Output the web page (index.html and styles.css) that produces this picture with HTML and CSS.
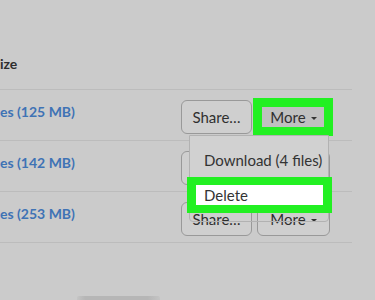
FILE: index.html
```html
<!DOCTYPE html>
<html>
<head>
<meta charset="utf-8">
<link rel="stylesheet" href="styles.css">
</head>
<body>
<div class="table">
  <div class="head">ize</div>
  <div class="row">
    <div class="name">es (125 MB)</div>
    <div class="actions">
      <button class="btn share">Share…</button>
      <div class="more-wrap">
        <button class="btn more active">More <span class="caret"></span></button>
        <span class="hl hl-more"></span>
        <div class="menu">
          <div class="menu-list">
            <div class="item">Download (4 files)</div>
            <div class="item sel">Delete<span class="hl hl-del"></span></div>
          </div>
        </div>
      </div>
    </div>
  </div>
  <div class="row">
    <div class="name">es (142 MB)</div>
    <div class="actions">
      <button class="btn share">Share…</button>
      <button class="btn more">More <span class="caret"></span></button>
    </div>
  </div>
  <div class="row">
    <div class="name">es (253 MB)</div>
    <div class="actions">
      <button class="btn share">Share…</button>
      <button class="btn more">More <span class="caret"></span></button>
    </div>
  </div>
</div>
<div class="scroll"><span class="thumb"></span></div>
</body>
</html>
```
FILE: styles.css
```css
html, body {
  margin: 0;
  padding: 0;
  height: 300px;
  overflow: hidden;
}
body {
  background: #cbcbcb;
  font-family: Lato, "Open Sans", sans-serif;
  color: #333;
}
.table {
  width: 352px;
}
.head {
  padding: 55px 0 17px;
  line-height: 17px;
  font-size: 14px;
  font-weight: 700;
  color: #2e2e2e;
  border-bottom: 1px solid #bcbcbc;
}
.row {
  display: flex;
  align-items: flex-start;
  height: 50px;
  padding-right: 22px;
  border-bottom: 1px solid #bcbcbc;
}
.row:nth-child(2) {
  position: relative;
  z-index: 2;
}
.name {
  flex: 1;
  margin-top: 13px;
  line-height: 17px;
  font-size: 14px;
  font-weight: 700;
  color: #3f73b5;
}
.actions {
  display: flex;
  gap: 5px;
  margin-top: 10px;
}
.btn {
  box-sizing: border-box;
  height: 34px;
  border: 1px solid #999;
  border-radius: 6px;
  background: #cfcfcf;
  font-family: Lato, "Open Sans", sans-serif;
  font-size: 15px;
  color: #2f2f2f;
  padding: 0;
  display: flex;
  align-items: center;
  justify-content: center;
}
.share {
  width: 71px;
}
.more {
  width: 73px;
  gap: 5px;
}
.more.active {
  background: #c0c0c0;
}
.caret {
  width: 0;
  height: 0;
  border-left: 3px solid transparent;
  border-right: 3px solid transparent;
  border-top: 3px solid #333;
  margin-top: 2px;
}
.more-wrap {
  position: relative;
}
.hl {
  position: absolute;
  box-sizing: border-box;
  border: 9px solid #22f022;
  pointer-events: none;
}
.hl-more {
  left: -4px;
  right: -3px;
  top: -2px;
  bottom: -2px;
  z-index: 3;
}
.menu {
  position: absolute;
  top: 35px;
  right: 1px;
  width: 140px;
  height: 87px;
  box-sizing: border-box;
  border: 1px solid #b2b2b2;
  border-radius: 0 0 4px 4px;
  z-index: 4;
}
.menu-list {
  background: #d1d1d1;
  padding-top: 8px;
}
.item {
  position: relative;
  padding-left: 14px;
  line-height: 32px;
  font-size: 15px;
  color: #333;
  white-space: nowrap;
}
.item.sel {
  margin-top: 1px;
  line-height: 36px;
  background: #fff;
}
.hl-del {
  left: -3px;
  right: -4px;
  top: 0;
  bottom: 0;
  border-width: 8px 9px;
}
.scroll {
  position: absolute;
  left: 0;
  top: 296px;
  width: 375px;
  height: 4px;
}
.thumb {
  display: block;
  margin-left: 77px;
  width: 83px;
  height: 4px;
  border-radius: 2px 2px 0 0;
  background: linear-gradient(90deg, #c4c4c4, #b6b6b6 10%, #b6b6b6 85%, #c4c4c4);
}
```
